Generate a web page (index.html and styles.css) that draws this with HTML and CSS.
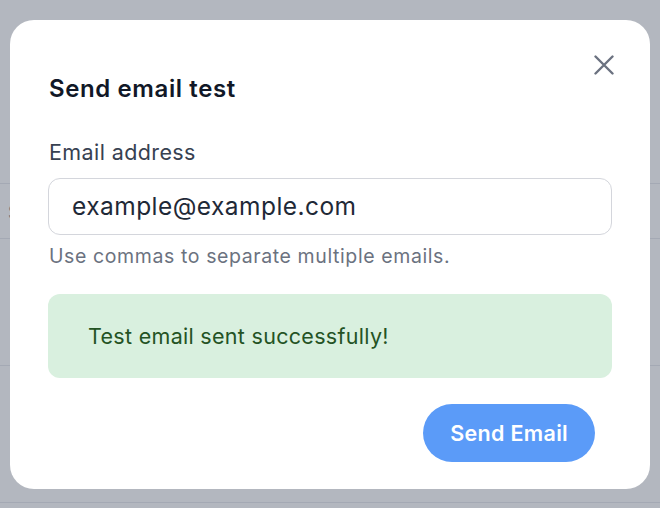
FILE: index.html
```html
<!DOCTYPE html>
<html lang="en">
<head>
<meta charset="utf-8">
<title>Send email test</title>
<link rel="stylesheet" href="styles.css">
</head>
<body>
<div class="page">
  <div class="page-row row-a"></div>
  <div class="page-row row-b"><span class="row-text">Settings</span></div>
  <div class="page-row row-c"></div>
  <div class="page-row row-d"></div>
</div>
<div class="overlay">
  <div class="modal" role="dialog" aria-labelledby="modal-title">
    <button class="close" type="button" aria-label="Close">
      <svg width="20" height="20" viewBox="0 0 20 20" fill="none" stroke="currentColor" stroke-width="2.4" stroke-linecap="round">
        <path d="M1.5 1.5 L18.5 18.5 M18.5 1.5 L1.5 18.5"/>
      </svg>
    </button>
    <h2 class="title" id="modal-title">Send email test</h2>
    <label class="label" for="email">Email address</label>
    <input class="input" id="email" type="text" value="example@example.com">
    <p class="help">Use commas to separate multiple emails.</p>
    <div class="alert">Test email sent successfully!</div>
    <div class="footer">
      <button class="send" type="button">Send Email</button>
    </div>
  </div>
</div>
</body>
</html>
```
FILE: styles.css
```css
* { box-sizing: border-box; }
html, body { margin: 0; padding: 0; }
body {
  width: 660px;
  height: 508px;
  overflow: hidden;
  font-family: Inter, "Noto Sans", "Liberation Sans", sans-serif;
  background: #ffffff;
  position: relative;
}
.page {
  display: flex;
  flex-direction: column;
}
.page-row {
  border-bottom: 1px solid #e3e5ea;
}
.row-a { height: 184px; }
.row-b { height: 55px; padding-top: 18px; }
.row-b .row-text { font-size: 18px; color: #6b7280; margin-left: 8px; }
.row-c { height: 127px; }
.row-d { height: 137px; }

.overlay {
  position: fixed;
  inset: 0;
  background: rgba(90, 97, 115, 0.46);
  display: flex;
  align-items: center;
  justify-content: center;
}
.modal {
  position: relative;
  width: 640px;
  background: #ffffff;
  border-radius: 24px;
  padding: 54px 38px 27px 38px;
  display: flex;
  flex-direction: column;
}
.close {
  position: absolute;
  top: 35px;
  right: 36px;
  width: 20px;
  height: 20px;
  padding: 0;
  border: 0;
  background: none;
  color: #6b7280;
  display: flex;
}
.title {
  margin: 0;
  font-size: 24px;
  line-height: 30px;
  font-weight: 600;
  letter-spacing: 0.6px;
  color: #111827;
  padding-left: 1px;
}
.label {
  margin-top: 34px;
  font-size: 21.5px;
  line-height: 28px;
  letter-spacing: 0.4px;
  color: #374151;
  padding-left: 1px;
}
.input {
  margin-top: 12px;
  width: 100%;
  height: 57px;
  border: 1px solid #d4d6dc;
  border-radius: 12px;
  padding: 0 23px;
  font-family: inherit;
  font-size: 24.5px;
  letter-spacing: 0.45px;
  color: #1f2937;
  background: #ffffff;
  outline: none;
}
.help {
  margin: 9px 0 0 0;
  font-size: 19.5px;
  line-height: 24px;
  letter-spacing: 0.6px;
  color: #6b7280;
  padding-left: 1px;
}
.alert {
  margin-top: 26px;
  background: #d9f0df;
  border-radius: 12px;
  padding: 28px 40px;
  font-size: 21.5px;
  line-height: 28px;
  letter-spacing: 0.3px;
  color: #245324;
}
.footer {
  margin-top: 26px;
  display: flex;
  justify-content: flex-end;
  padding-right: 17px;
}
.send {
  height: 58px;
  padding: 0 27px;
  border: 0;
  border-radius: 999px;
  background: #5b9bf8;
  color: #ffffff;
  font-family: inherit;
  font-size: 21.5px;
  font-weight: 600;
  letter-spacing: 0.3px;
}
```
